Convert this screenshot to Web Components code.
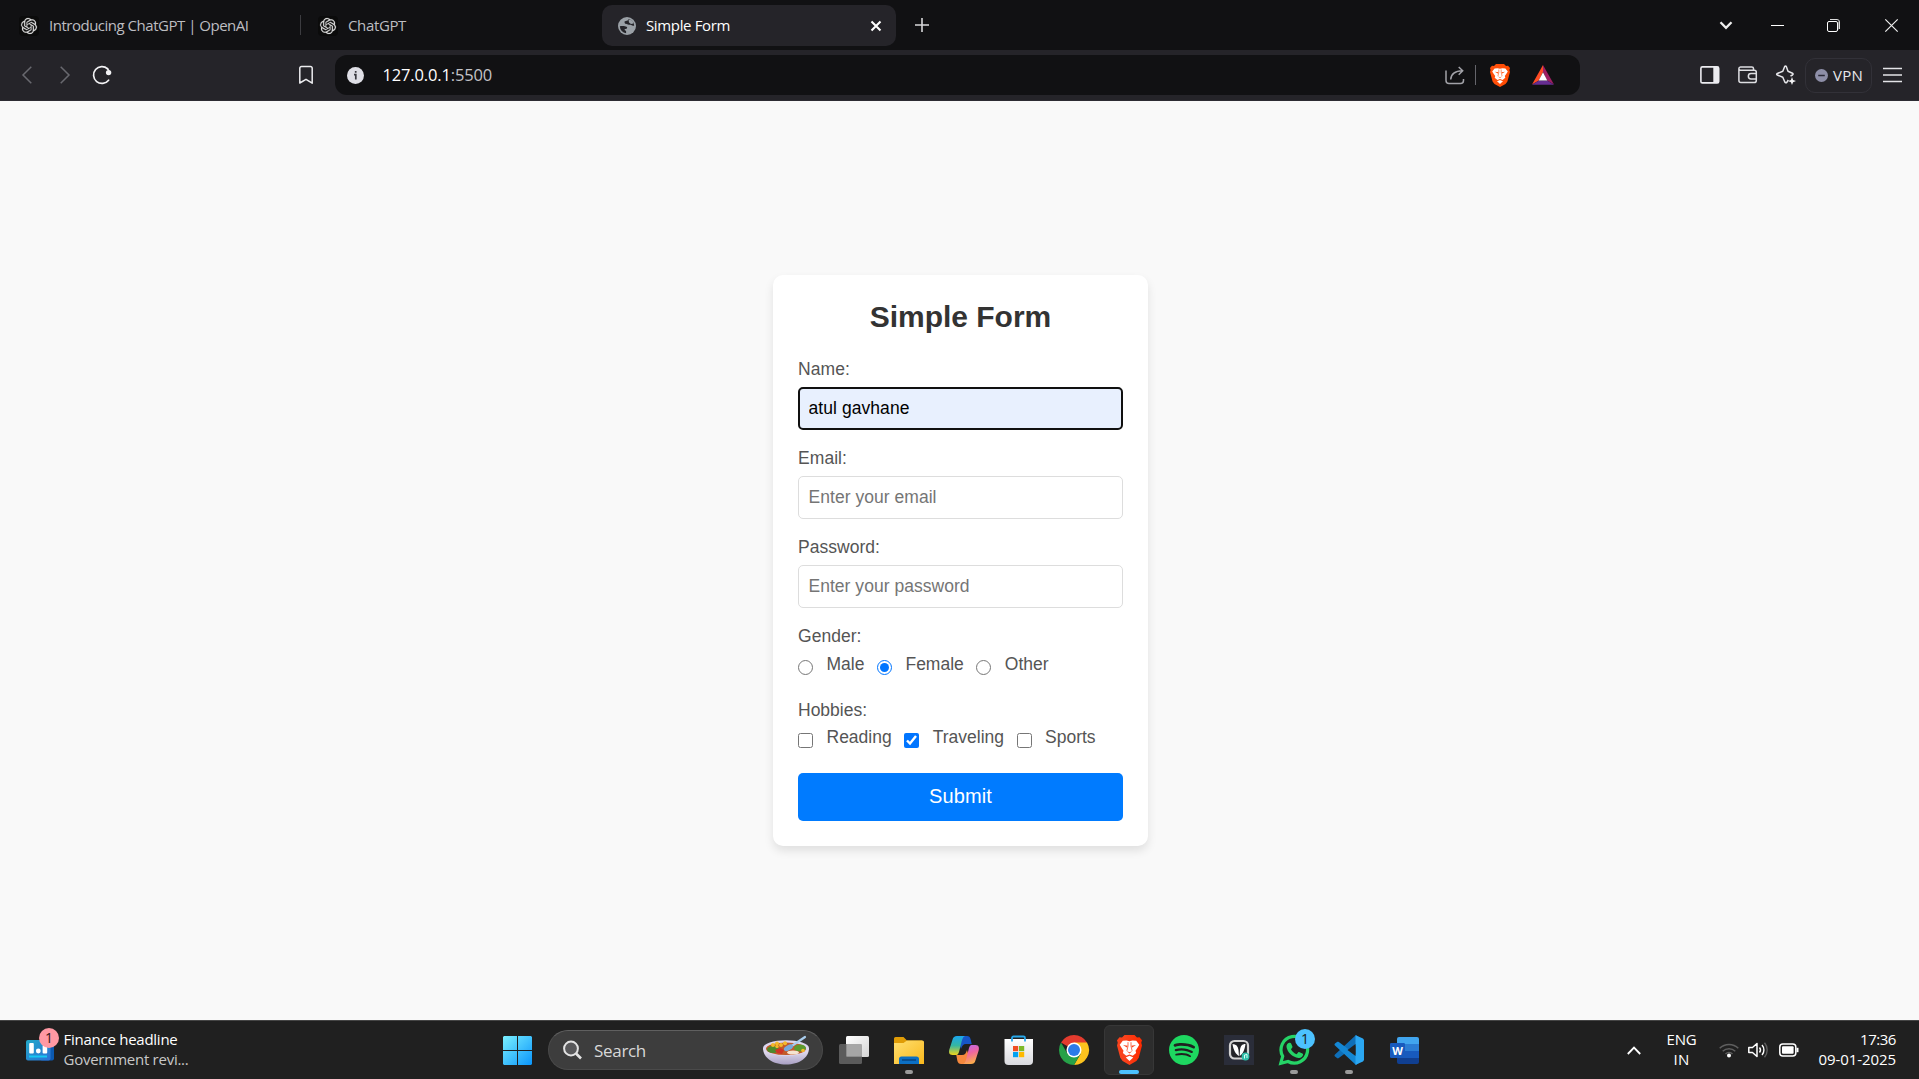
<!DOCTYPE html>
<html lang="en">
<head>
<meta charset="utf-8">
<title>Simple Form</title>
<style>
html,body{margin:0;height:100%;overflow:hidden}
body{font-family:"Open Sans","Noto Sans",sans-serif;background:#f9f9f9}
</style>
</head>
<body>
<desktop-screen></desktop-screen>
<script>
const make = (name, html, setup) => customElements.define(name, class extends HTMLElement {
  connectedCallback() {
    if (this.shadowRoot) return;
    const root = this.attachShadow({mode: 'open'});
    root.innerHTML = typeof html === 'function' ? html(this) : html;
    if (setup) setup(this, root);
  }
});

const BRAVE = (a, b) => `<defs><linearGradient id="g"><stop offset=".3" stop-color="${a}"/><stop offset="1" stop-color="${b}"/></linearGradient></defs>
<path fill="url(#g)" d="M6 0h8l2 2 2-.3L20 4l-.6 2L20 8l-2.600 9.500L15.500 20 10 23 4.500 20 2.600 17.500 0 8l.6-2L0 4l2-2.300L4 2z"/>
<path fill="#fff" d="M10 4.700 7.600 4.200 4.600 4.400 2.200 7.400 3.600 9.800 5.200 12 4.700 13.800 7.400 16 10 14.900 12.600 16 15.300 13.800 14.800 12 16.400 9.800 17.800 7.400 15.400 4.400 12.400 4.200z"/>
<path fill="#fff" d="M10 15.900 7 17.300 10 19.900 13 17.300z"/>
<path fill="${a}" d="M4.800 7.700 8.600 8.300 7.900 9.600zM15.200 7.700 11.400 8.300 12.100 9.600zM7.700 12.300 10 13.200 12.300 12.300 10 14.100z"/>
<path fill="none" stroke="${a}" stroke-width=".6" d="M8.800 5.500v3l-.9 3.600M11.200 5.500v3l.9 3.600"/>`;

const ICONS = {
  openai: [20, 20, `<rect width="20" height="20" rx="4" fill="#0b0b0b"/><g transform="translate(2 2) scale(.667)"><path fill="#dcdcdc" stroke="#dcdcdc" stroke-width=".3" d="M22.2819 9.8211a5.9847 5.9847 0 0 0-.5157-4.9108 6.0462 6.0462 0 0 0-6.5098-2.9A6.0651 6.0651 0 0 0 4.9807 4.1818a5.9847 5.9847 0 0 0-3.9977 2.9 6.0462 6.0462 0 0 0 .7427 7.0966 5.98 5.98 0 0 0 .511 4.9107 6.051 6.051 0 0 0 6.5146 2.9001A5.9847 5.9847 0 0 0 13.2599 24a6.0557 6.0557 0 0 0 5.7718-4.2058 5.9894 5.9894 0 0 0 3.9977-2.9001 6.0557 6.0557 0 0 0-.7475-7.0729zm-9.022 12.6081a4.4755 4.4755 0 0 1-2.8764-1.0408l.1419-.0804 4.7783-2.7582a.7948.7948 0 0 0 .3927-.6813v-6.7369l2.02 1.1686a.071.071 0 0 1 .038.052v5.5826a4.504 4.504 0 0 1-4.4945 4.4944zm-9.6607-4.1254a4.4708 4.4708 0 0 1-.5346-3.0137l.142.0852 4.783 2.7582a.7712.7712 0 0 0 .7806 0l5.8428-3.3685v2.3324a.0804.0804 0 0 1-.0332.0615L9.74 19.9502a4.4992 4.4992 0 0 1-6.1408-1.6464zM2.3408 7.8956a4.485 4.485 0 0 1 2.3655-1.9728V11.6a.7664.7664 0 0 0 .3879.6765l5.8144 3.3543-2.0201 1.1685a.0757.0757 0 0 1-.071 0l-4.8303-2.7865A4.504 4.504 0 0 1 2.3408 7.872zm16.5963 3.8558L13.1038 8.364 15.1192 7.2a.0757.0757 0 0 1 .071 0l4.8303 2.7913a4.4944 4.4944 0 0 1-.6765 8.1042v-5.6772a.79.79 0 0 0-.407-.667zm2.0107-3.0231l-.142-.0852-4.7735-2.7818a.7759.7759 0 0 0-.7854 0L9.409 9.2297V6.8974a.0662.0662 0 0 1 .0284-.0615l4.8303-2.7866a4.4992 4.4992 0 0 1 6.6802 4.66zM8.3065 12.863l-2.02-1.1638a.0804.0804 0 0 1-.038-.0567V6.0742a4.4992 4.4992 0 0 1 7.3757-3.4537l-.142.0805L8.704 5.459a.7948.7948 0 0 0-.3927.6813zm1.0976-2.3654l2.602-1.4998 2.6069 1.4998v2.9994l-2.5974 1.4997-2.6067-1.4997Z"/></g>`],
  globe: [18, 18, `<circle cx="9" cy="9" r="9" fill="#9aa0a6"/><path fill="#252429" d="M1.800 9.300C4 8.700 7 8.900 8.600 9.700c.9.600.7 1.700-.3 2-.9.300-1.800.2-1.700 1 .1.700 1.400.7 1.500 1.600v1.900A7.300 7.300 0 0 1 1.800 9.300zM10.500 1.900c-.1 1.500-1.500 1.900-2.600 2-1.300.1-1.600.8-1.300 1.500.4.700.1 1.300 1.200 1.400 1.200.1 1.700.9 3 1 1.200 0 1.700-.3 2.400.3.600.6 1.500.7 3 .6a7.300 7.300 0 0 0-5.700-6.800z"/><path fill="#9aa0a6" d="M10.500 2.500 14.500 3.500 15.500 6.500 13 7 11 5.500z"/>`],
  tabclose: [12, 12, `<path d="M1.500 1.500l9 9m0-9l-9 9" stroke="#fff" stroke-width="2.100" fill="none"/>`],
  plus: [14, 14, `<path d="M7 0v14M0 7h14" stroke="#d8d8da" stroke-width="1.600" fill="none"/>`],
  chevdown: [14, 9, `<path d="M1.500 1.300 7 6.800l5.500-5.500" stroke="#eee" stroke-width="2.300" fill="none"/>`],
  minimise: [13, 13, `<path d="M0 6.500h13" stroke="#fff"/>`],
  restore: [13, 13, `<rect x=".5" y="2.500" width="10" height="10" rx="1.500" fill="none" stroke="#fff"/><path d="M3 .5h7a2.500 2.500 0 0 1 2.500 2.500v7" fill="none" stroke="#ddd"/><path d="M11.500 2.500v8" stroke="#777"/>`],
  close: [13, 13, `<path d="M.3.3l12.400 12.400M12.700.3.3 12.700" stroke="#eee" stroke-width="1.200"/>`],
  back: [10, 18, `<path d="M9.300.8 1 9l8.300 8.200" stroke="#69696f" stroke-width="1.500" fill="none"/>`],
  forward: [10, 18, `<path d="M.7.8 9 9 .7 17.200" stroke="#69696f" stroke-width="1.500" fill="none"/>`],
  reload: [20, 20, `<path d="M16.600 15.200A8.400 8.400 0 1 1 15.600 3.800" stroke="#f2f2f4" stroke-width="1.700" fill="none" stroke-linecap="round"/><circle cx="16.600" cy="7.600" r="2.700" fill="#f2f2f4"/><path d="M15 3l2 3" stroke="#f2f2f4" stroke-width="1.500"/>`],
  bookmark: [16, 20, `<path d="M1.800 18V3.200A1.700 1.700 0 0 1 3.500 1.500h9a1.700 1.700 0 0 1 1.700 1.700V18.200L8 14.300z" stroke="#ececef" stroke-width="1.500" fill="none" stroke-linejoin="round"/>`],
  info: [17, 17, `<circle cx="8.500" cy="8.500" r="8.500" fill="#dfdfe6"/><path d="M7 7.700h1.800v4.800M8.700 4.100v1.700" stroke="#3a3a40" stroke-width="1.700" fill="none"/>`],
  share: [20, 19, `<path d="M1 4.500V14.500a3 3 0 0 0 3 3h11.500a3 3 0 0 0 3-3V13" stroke="#a2a2a8" stroke-width="1.500" fill="none"/><path d="M5.700 13.500C6 8.500 9.500 5 17.500 4.800M13.700 1l4 3.800-4 3.900" stroke="#a2a2a8" stroke-width="1.500" fill="none"/>`],
  brave: [20, 23, BRAVE('#ff4f0a', '#ff4a00')],
  braveapp: [25, 30, BRAVE('#f9421c', '#ff2a00'), '0 0 20 23'],
  bat: [22, 20, `<path fill="#ff4c24" d="M11 0 0 19.500l6.800-4L11 7z"/><path fill="#9e1f63" d="M11 0l11 19.500-6.800-4L11 7z"/><path fill="#662d91" d="M0 19.700h22l-6.800-4.300H6.800z"/><path fill="#fff" d="M11 7.300 6.700 15.400h8.600z"/>`],
  panel: [20, 18, `<rect x=".9" y=".9" width="17.800" height="16" rx="1.500" fill="none" stroke="#ececf0" stroke-width="1.600"/><path fill="#ececf0" d="M13.300 1h5.700v16h-5.700z"/>`],
  wallet: [20, 18, `<path d="M15.500 4.300V2.600a1.700 1.700 0 0 0-1.700-1.700H2.500A1.700 1.700 0 0 0 .9 2.600v12a2 2 0 0 0 2 2h13.200a2.200 2.200 0 0 0 2.200-2.200V6.200a2 2 0 0 0-2-2H2.500A1.600 1.600 0 0 1 .9 2.700M18 7.600h-5a2.600 2.600 0 0 0 0 5.300h5" stroke="#dedee2" stroke-width="1.500" fill="none"/>`],
  sparkle: [20, 20, `<path d="M12.800 15 11.300 17.400Q10.300 18.300 9.300 17L7.300 12.300 1.800 10Q.5 9.300 1.800 8.500L7.300 6.300 9.200 1.500Q10 .3 10.800 1.500L12.500 6.300 17 8.200Q18.200 9 17 10L15 11" transform="translate(-.5)" stroke="#e6e6ea" stroke-width="1.500" fill="none" stroke-linejoin="round"/><path d="M16 12l1.100 3 2.900 1.100-2.900 1.100-1.100 2.800-1.100-2.800L12 16.100l2.900-1.100z" fill="#f2f2f4"/>`],
  vpndot: [13, 13, `<circle cx="6.500" cy="6.500" r="6.500" fill="#8e8fa8"/><path d="M3.200 6.500h6.600" stroke="#2a2a38" stroke-width="1.500"/>`],
  menu: [19, 16, `<path d="M0 1.500h19M0 8h19M0 14.500h19" stroke="#e4e4e8" stroke-width="1.600"/>`],
  widget: [28, 21, `<defs><linearGradient id="g" x2="1" y2="1"><stop stop-color="#22a9c8"/><stop offset="1" stop-color="#2b6fd6"/></linearGradient></defs><rect x="14" y="0" width="14" height="20.500" rx="2" fill="#0b59b0"/><rect width="24.500" height="20.500" rx="2" fill="url(#g)"/><rect x="3.200" y="3" width="4.600" height="10.500" rx="1" fill="#fff"/><circle cx="12.300" cy="11" r="2.400" fill="#fff"/><rect x="16.600" y="5" width="4.600" height="8.500" rx="1" fill="#fff"/><path d="M3 16.500h18" stroke="#17c8f3" stroke-width="2"/>`],
  start: [29, 29, `<defs><linearGradient id="g" gradientUnits="userSpaceOnUse" x2="29" y2="29"><stop stop-color="#7af0ff"/><stop offset="1" stop-color="#0a95fb"/></linearGradient></defs><path fill="url(#g)" d="M1 0h13v14H0V1zM15 0h13l1 1v13H15zM0 15h14v14H1l-1-1zM15 15h14v13l-1 1H15z"/>`],
  search: [19, 20, `<circle cx="8" cy="8.500" r="6.900" fill="#58585a" stroke="#e3e3e3" stroke-width="2"/><path d="M13 13.500l5 5" stroke="#e3e3e3" stroke-width="2.600"/>`],
  bowl: [46, 29, `<defs><linearGradient id="g" x2="0" y2="1"><stop stop-color="#efeaf8"/><stop offset="1" stop-color="#a9a0c4"/></linearGradient></defs><path fill="url(#g)" d="M0 12C0 22 10 28.500 23 28.500S46 22 46 12z"/><ellipse cx="23" cy="12" rx="23" ry="7.800" fill="#dcd5ee"/><ellipse cx="23" cy="12.700" rx="20" ry="6.300" fill="#c25a2a"/><ellipse cx="10" cy="13.500" rx="6" ry="3.500" fill="#4d8a2b"/><ellipse cx="37" cy="12" rx="6" ry="3.600" fill="#5c9a2f"/><g fill="#f3b929"><circle cx="10" cy="9" r="2"/><circle cx="14" cy="7.500" r="2"/><circle cx="18" cy="9" r="2"/><circle cx="22" cy="7.300" r="2"/><circle cx="14" cy="10.500" r="1.700"/><circle cx="40" cy="14.500" r="1.800"/></g><path fill="#cf3326" d="M12 14l5-2 4 2-2 4-5-1z"/><ellipse cx="30" cy="16.500" rx="6" ry="2" fill="#f5e4d0"/><path d="M25 12.500 42 1" stroke="#a9cdee" stroke-width="2.200" stroke-linecap="round"/><ellipse cx="25.500" cy="12" rx="5" ry="2.500" transform="rotate(-28 25 12)" fill="#78a9da"/>`],
  taskview: [30, 28, `<defs><linearGradient id="g" x2="1" y2="1"><stop stop-color="#fff"/><stop offset="1" stop-color="#d5d5d5"/></linearGradient></defs><rect x="7" y="0" width="23" height="21" rx="1.500" fill="url(#g)"/><rect x="0" y="8" width="23" height="20" rx="1.500" fill="#646464" opacity=".87"/><path d="M7.500 8h15.500v12.500h-15.500z" fill="#bbb" opacity=".7"/>`],
  folder: [30, 27, `<defs><linearGradient id="g" x2="1" y2="1"><stop stop-color="#ffdf70"/><stop offset="1" stop-color="#f9b81c"/></linearGradient></defs><path fill="#e09c06" d="M0 1.500A1.500 1.500 0 0 1 1.500 0h8L13 3.500h15V10H0z"/><path fill="url(#g)" d="M0 6h9.500l3.500-2.500h15.500A1.500 1.500 0 0 1 30 5v22H0z"/><path fill="#0c70c4" d="M5 27v-5a2.500 2.500 0 0 1 2.500-2.500h15A2.500 2.500 0 0 1 25 22v5z"/><path stroke="#073f78" stroke-width="1.300" d="M8 23h14"/>`],
  copilot: [30, 28, `<defs><linearGradient id="a" x2="0" y2="1"><stop stop-color="#1ba6ee"/><stop offset=".5" stop-color="#35b6a2"/><stop offset="1" stop-color="#f0d41b"/></linearGradient><linearGradient id="b" x2=".3" y2="1"><stop stop-color="#b46cf5"/><stop offset=".5" stop-color="#ef64a2"/><stop offset="1" stop-color="#fba94e"/></linearGradient></defs><path fill="#1655c8" d="M8 0h10c2 0 3 1.200 3.600 3.200L22.700 8H17c-3 0-4 2-5 5z"/><path fill="#f5883d" d="M22 28H12c-2 0-3-1-3.600-3L7.300 19H13c3 0 4-2 5-5z"/><path fill="url(#a)" d="M8 0h8c-2.500 1-3 4-4 8l-2 8c-.8 2.500-1.500 3-4 3H3.500C0 19-.5 16 .5 13L3.400 4C4.200 1 5.500 0 8 0z"/><path fill="url(#b)" d="M22 28h-8c2.500-1 3-4 4-8l2-8c.8-2.500 1.500-3 4-3h2.500c3.500 0 4 3 3 6l-2.900 9c-.8 3-2.100 4-4.600 4z"/>`],
  store: [30, 30, `<defs><linearGradient id="g" x2="0" y2="1"><stop stop-color="#fff"/><stop offset="1" stop-color="#d9dade"/></linearGradient></defs><path d="M8 6V3a1.500 1.500 0 0 1 1.500-1.500h10A1.500 1.500 0 0 1 21 3v3" fill="none" stroke="#28a8ea" stroke-width="1.800"/><path fill="url(#g)" d="M1 4h28v22a4 4 0 0 1-4 4H4.500A4 4 0 0 1 .5 26V4z"/><path d="M8 4v2.500M21 4v2.500" stroke="#28a8ea" stroke-width="1.800"/><path fill="#f04e23" d="M9 11h5.200v5.200H9z"/><path fill="#7db928" d="M15 11h5.200v5.200H15z"/><path fill="#00a1f1" d="M9 17h5.200v5.200H9z"/><path fill="#ffb900" d="M15 17h5.200v5.200H15z"/>`],
  chrome: [30, 30, `<path fill="#e33b2e" d="M15 15 2.010 7.500A15 15 0 0 1 27.990 7.500z"/><path fill="#fcc31e" d="M15 15V7.500h13A15 15 0 0 1 15 30l6.500-11z"/><path fill="#26a148" d="M2.010 7.500A15 15 0 0 0 15 30l6.500-11.300L15 15 8.500 18.700z"/><circle cx="15" cy="15" r="7.500" fill="#fff"/><circle cx="15" cy="15" r="6" fill="#2c7be8"/>`],
  spotify: [30, 30, `<path fill="#1ed760" d="M12 0C5.400 0 0 5.400 0 12s5.400 12 12 12 12-5.400 12-12S18.660 0 12 0zm5.521 17.340c-.24.359-.66.480-1.021.240-2.820-1.740-6.360-2.101-10.561-1.141-.418.122-.779-.179-.899-.539-.12-.421.180-.780.540-.900 4.560-1.021 8.520-.600 11.640 1.320.420.180.479.659.301 1.020zm1.440-3.300c-.301.420-.841.600-1.262.300-3.239-1.980-8.159-2.580-11.939-1.380-.479.120-1.020-.120-1.140-.600-.120-.480.120-1.021.600-1.141C9.600 9.900 15 10.561 18.720 12.840c.361.181.540.780.241 1.200zm.120-3.360C15.240 8.400 8.820 8.160 5.160 9.301c-.600.179-1.200-.181-1.380-.721-.180-.601.180-1.200.720-1.381 4.260-1.260 11.280-1.020 15.721 1.621.539.300.719 1.020.419 1.560-.299.421-1.020.599-1.559.300z"/>`, '0 0 24 24'],
  jio: [30, 30, `<path fill="#2a2d39" d="M0 0h30v30H0z"/><rect x="6" y="6" width="18" height="17.500" rx="4.500" fill="#232428" stroke="#d2d2d2" stroke-width="2.200"/><path fill="#fff" d="M8.500 9c3.500 0 5.500 2 6 6L15 21c-3-1.500-5.700-6-6.500-12zM21.500 9c-3.500 0-5 2-5.500 6L15.600 21c3-1.500 5.100-6 5.900-12z"/><circle cx="21.500" cy="21.500" r="3.900" fill="#2fbfa9"/><path d="M20.500 23.500v-3.500l2.500-.5v3.500" stroke="#d8fff8" fill="none"/>`],
  whatsapp: [30, 30, `<path d="M1.800 28.200 3.700 21.300A13.300 13.300 0 1 1 9 26.500z" fill="none" stroke="#25d366" stroke-width="3.200"/><path fill="#25d366" d="M10.300 7.800c.8-.3 1.500 0 1.800.6l1.300 3c.2.600 0 1-.3 1.400l-1.100 1.400c1.300 2.400 3.200 4 5.600 5l1.500-1.700c.4-.5.9-.5 1.400-.3l2.900 1.400c.6.300.8.6.7 1.200-.4 2.200-2.300 3.500-4.600 3.200C13 22 8.400 17 7.500 12c-.2-1.900 1-3.700 2.800-4.200z"/>`],
  vscode: [30, 30, `<path fill="#0f6fb8" d="M22 0 1 19.500c-.7.700-.6 1.400 0 2L3 23c.6.500 1.200.5 1.800 0L29 5z"/><path fill="#1487d4" d="M22 30 1 10.500c-.7-.7-.6-1.400 0-2L3 7c.6-.5 1.200-.5 1.800 0L29 25z"/><path fill="#2ba7f2" d="M21.500.2 29 3.500l1 1.500v20l-1 1.500-7.500 3.300V0z"/><path fill="#222" d="M21.500 9v12L13.500 15z"/>`],
  word: [29, 27, `<path fill="#41a5ee" d="M7 2a2 2 0 0 1 2-2h18a2 2 0 0 1 2 2v5H7z"/><path fill="#2b7cd3" d="M7 7h22v7H7z"/><path fill="#185abd" d="M7 14h22v7H7z"/><path fill="#103f91" d="M7 21h22v4a2 2 0 0 1-2 2H9a2 2 0 0 1-2-2z"/><rect x="0" y="6" width="15" height="15" rx="1.200" fill="#185abd"/><text x="7.500" y="17.600" text-anchor="middle" font-family="Open Sans" font-weight="700" font-size="11" fill="#fff">W</text>`],
  caret: [14, 9, `<path d="M.8 8 7 1.600 13.200 8" stroke="#fff" stroke-width="1.800" fill="none"/>`],
  wifi: [20, 16, `<g fill="none" stroke="#5e5e5e" stroke-width="1.500"><path d="M.7 6.300a13 13 0 0 1 18.600 0M3.700 9.300a9 9 0 0 1 12.600 0M6.500 12a5 5 0 0 1 7 0"/></g><circle cx="10" cy="13.500" r="2" fill="#fff"/>`],
  speaker: [20, 16, `<path d="M.8 5.500h3.700L9 1.500v13l-4.500-4H.8z" fill="none" stroke="#fff" stroke-width="1.500" stroke-linejoin="round"/><path d="M11.500 5.500a4 4 0 0 1 0 5M14 3a7.500 7.500 0 0 1 0 10" fill="none" stroke="#fff" stroke-width="1.400"/><path d="M16.500.8a11 11 0 0 1 0 14.400" fill="none" stroke="#5e5e5e" stroke-width="1.400"/>`],
  battery: [20, 14, `<rect x=".8" y="1" width="16" height="12" rx="3" fill="none" stroke="#fff" stroke-width="1.500"/><rect x="3" y="3.200" width="11.600" height="7.600" rx="1" fill="#fff"/><path d="M18.500 4.800v4.400" stroke="#fff" stroke-width="2"/>`]
};

/* Inline icon; name picks the drawing */
make('ui-icon', el => {
  const [w, h, body, box] = ICONS[el.getAttribute('name')];
  return `<style>:host{display:block;flex:none;width:${w}px;height:${h}px}svg{display:block;overflow:visible}</style><svg width="${w}" height="${h}" viewBox="${box || `0 0 ${w} ${h}`}"${box ? ' preserveAspectRatio="none"' : ''}>${body}</svg>`;
});

/* Single-line text tracked to occupy a given advance width */
make('fit-text', `<style>:host{display:block;flex:none;white-space:nowrap;width:max-content}</style><slot></slot>`, el => {
  const w = parseFloat(el.getAttribute('w'));
  const natural = el.getBoundingClientRect().width;
  const n = el.textContent.length;
  el.style.letterSpacing = ((w - natural) / n).toFixed(3) + 'px';
});

make('browser-tab', el => `<style>
:host{display:flex;align-items:center;box-sizing:border-box;height:41px;border-radius:10px;font-size:15px;line-height:20px;color:#bdbdc1;flex:none}
:host([active]){background:#252429;color:#fff}
fit-text{margin:0 0 2px 10px}
.x{margin-left:auto}
</style><ui-icon name="${el.getAttribute('icon')}"></ui-icon><fit-text w="${el.getAttribute('w')}">${el.getAttribute('label')}</fit-text>${el.hasAttribute('active') ? '<ui-icon class="x" name="tabclose"></ui-icon>' : ''}`);

make('tab-strip', `<style>
:host{display:flex;align-items:center;height:50px;background:#111113;flex:none}
.a{width:300px;padding-left:19px}
.sep{width:1px;height:20px;background:#3c3c40}
.b{width:301px;padding-left:17px}
.c{width:294px;padding:0 14px 0 16px}
.c,.a,.b{margin-top:1px}
.plus{margin-left:19px}
.d{margin-left:auto}
.m{margin-left:38px}.r{margin-left:43px}.x{margin-left:45px;margin-right:21px}
</style>
<browser-tab class="a" icon="openai" w="199.500" label="Introducing ChatGPT | OpenAI"></browser-tab><div class="sep"></div>
<browser-tab class="b" icon="openai" w="58" label="ChatGPT"></browser-tab>
<browser-tab class="c" active icon="globe" w="84" label="Simple Form"></browser-tab>
<ui-icon class="plus" name="plus"></ui-icon>
<ui-icon class="d" name="chevdown"></ui-icon><ui-icon class="m" name="minimise"></ui-icon><ui-icon class="r" name="restore"></ui-icon><ui-icon class="x" name="close"></ui-icon>`);

make('tool-bar', `<style>
:host{display:flex;align-items:center;height:51px;box-sizing:border-box;padding-left:22px;background:#252429;flex:none;color:#fff;border-bottom:1px solid #2d2c33}
.f{margin-left:28px}.r{margin-left:22px}.b{margin-left:186px}
.url{display:flex;align-items:center;box-sizing:border-box;width:1245px;height:40px;margin-left:21px;padding-left:12px;border-radius:12px;background:#111113;font-size:16.500px}
.url fit-text{margin:0 0 2px 18.500px}
span{color:#c3c3c7}
.s{margin-left:auto}
.bar{width:1px;height:20px;background:#65656b;margin-left:10px}
.br{margin-left:14px}.bat{margin:0 26px 0 22px}
.p{margin-left:120px}.w{margin-left:18px}.k{margin-left:18px}
.vpn{display:flex;align-items:center;box-sizing:border-box;width:67px;height:35px;margin-left:9px;padding-left:9px;border:1px solid #323138;border-radius:10px;font-size:15px;color:#e8e8ec}
.vpn fit-text{margin-left:5px}
.m{margin-left:11px}
</style>
<ui-icon name="back"></ui-icon><ui-icon class="f" name="forward"></ui-icon><ui-icon class="r" name="reload"></ui-icon><ui-icon class="b" name="bookmark"></ui-icon>
<div class="url"><ui-icon name="info"></ui-icon><fit-text w="109.500">127.0.0.1<span>:5500</span></fit-text><ui-icon class="s" name="share"></ui-icon><div class="bar"></div><ui-icon class="br" name="brave"></ui-icon><ui-icon class="bat" name="bat"></ui-icon></div>
<ui-icon class="p" name="panel"></ui-icon><ui-icon class="w" name="wallet"></ui-icon><ui-icon class="k" name="sparkle"></ui-icon>
<div class="vpn"><ui-icon name="vpndot"></ui-icon><fit-text w="30">VPN</fit-text></div><ui-icon class="m" name="menu"></ui-icon>`);

make('form-field', el => `<style>
:host{display:block;height:89px;color:#555}
label{display:block;height:20px;margin-bottom:8px;line-height:20px}
input{display:block;box-sizing:border-box;width:325px;height:43px;margin:0;padding:0 9.500px;border:1px solid #ddd;border-radius:5px;background:#fff;font:inherit;outline:0}
input::placeholder{color:#757575;opacity:1}
:host([filled]) input{border:2px solid #101010;padding:0 8.500px;background:#e8f0fe;color:#000}
</style><label><fit-text w="${el.getAttribute('lw')}">${el.getAttribute('label')}</fit-text></label>
<input type="text" ${el.hasAttribute('filled') ? 'value' : 'placeholder'}="${el.getAttribute('text')}">`, (el, root) => {
  const ctx = document.createElement('canvas').getContext('2d');
  ctx.font = '17.5px "Liberation Sans"';
  const t = el.getAttribute('text');
  root.querySelector('input').style.letterSpacing = ((el.getAttribute('tw') - ctx.measureText(t).width) / t.length).toFixed(3) + 'px';
});

make('choice-option', el => `<style>
:host{display:flex;align-items:flex-start;flex:none}
input{width:15px;height:15px;margin:5.500px 13.500px 0 0;accent-color:#0075ff}
</style><input type="${el.getAttribute('type')}" ${el.hasAttribute('checked') ? 'checked' : ''}><fit-text w="${el.getAttribute('w')}"><slot></slot></fit-text>`, (el, root) => {
  const t = root.querySelector('fit-text');
  t.textContent = el.textContent;
});

make('simple-form', `<style>
:host{display:block;box-sizing:border-box;width:375px;height:571px;padding:24px 25px 25px;background:#fff;border-radius:10px;box-shadow:0 5px 10px rgba(0,0,0,.1);font-family:"Liberation Sans",Arial,sans-serif;font-size:17.500px;line-height:20px;color:#555}
h2{display:flex;justify-content:center;margin:0 0 25px;height:35px;line-height:35px;font-size:30px;color:#333}
.row{display:flex;height:20px}
.g{margin:8px 0 26px}.h{margin:7px 0 26px}
.g choice-option+choice-option,.h choice-option+choice-option{margin-left:12.500px}
button{display:flex;justify-content:center;align-items:center;width:325px;height:48px;padding:0 0 2px;border:0;border-radius:5px;background:#007bff;color:#fff;font:20px "Liberation Sans",Arial,sans-serif}
</style>
<h2><fit-text w="181.500">Simple Form</fit-text></h2>
<form-field label="Name:" lw="52" filled text="atul gavhane" tw="101"></form-field>
<form-field label="Email:" lw="49" text="Enter your email" tw="128"></form-field>
<form-field label="Password:" lw="82" text="Enter your password" tw="161"></form-field>
<fit-text w="63.500">Gender:</fit-text>
<div class="row g"><choice-option type="radio" w="37.500">Male</choice-option><choice-option type="radio" checked w="58">Female</choice-option><choice-option type="radio" w="44">Other</choice-option></div>
<fit-text w="69">Hobbies:</fit-text>
<div class="row h"><choice-option type="checkbox" w="65">Reading</choice-option><choice-option type="checkbox" checked w="71.500">Traveling</choice-option><choice-option type="checkbox" w="51">Sports</choice-option></div>
<button><fit-text w="63">Submit</fit-text></button>`);

make('count-badge', `<style>:host{display:flex;align-items:center;justify-content:center;box-sizing:border-box;width:20px;height:20px;border-radius:50%;color:#1a1a1a;font-size:14px;line-height:20px}</style><slot></slot>`);

make('task-item', el => `<style>
:host{position:relative;display:flex;align-items:center;justify-content:center;box-sizing:border-box;width:50px;height:50px;margin-right:5px;border-radius:6px;flex:none}
:host([state=active]){background:#2d2d2d;border:1px solid #373737}
i{position:absolute;left:50%;bottom:1px;width:8px;height:4px;margin-left:-4px;border-radius:2px;background:#9a9a9a}
:host([state=active]) i{width:20px;margin-left:-10px;bottom:0;background:#4cc2ff}
::slotted(count-badge){position:absolute;left:26px;top:4px;background:#4cc2ff}
</style><ui-icon name="${el.getAttribute('icon')}"></ui-icon>${el.hasAttribute('state') ? '<i></i>' : ''}<slot></slot>`);

make('task-bar', `<style>
:host{display:flex;align-items:center;box-sizing:border-box;height:59px;border-top:1px solid #454545;background:#202020;color:#fff;font-size:15px;line-height:20px;flex:none}
.news{display:flex;align-items:center;width:477px;padding-left:26px;position:relative}
.news count-badge{position:absolute;left:39px;top:-1px;background:#ff99a4;color:#331518}
.news div{margin:0 0 2px 9.500px}
.sub{color:#c8c8c8}
.search{display:flex;align-items:center;box-sizing:border-box;width:275px;height:40px;margin-left:16px;padding:0 13px 0 14px;border-radius:20px;background:#3d3d3d;border:1px solid #4a4a4a;border-top-color:#606060;font-size:17px;color:#d8d8d8}
.search fit-text{margin:1px 0 0 12px}
.search .bowl{margin-left:auto}
.apps{display:flex;margin-left:6px}
.tray{display:flex;align-items:center;margin-left:auto;margin-right:23px}
.lang,.clock{margin-bottom:2px}
.lang{display:flex;flex-direction:column;align-items:center;margin-right:22px;margin-left:26px}
.sp{margin:0 11px 0 9px}
.clock{display:flex;flex-direction:column;align-items:flex-end;margin-left:20px}
</style>
<div class="news"><ui-icon name="widget"></ui-icon><count-badge>1</count-badge><div><fit-text w="114">Finance headline</fit-text><fit-text class="sub" w="125">Government revi...</fit-text></div></div>
<ui-icon name="start"></ui-icon>
<div class="search"><ui-icon name="search"></ui-icon><fit-text w="52">Search</fit-text><ui-icon class="bowl" name="bowl"></ui-icon></div>
<div class="apps">
<task-item icon="taskview"></task-item><task-item icon="folder" state="open"></task-item><task-item icon="copilot"></task-item><task-item icon="store"></task-item><task-item icon="chrome"></task-item><task-item icon="braveapp" state="active"></task-item><task-item icon="spotify"></task-item><task-item icon="jio"></task-item><task-item icon="whatsapp" state="open"><count-badge>1</count-badge></task-item><task-item icon="vscode" state="open"></task-item><task-item icon="word"></task-item>
</div>
<div class="tray"><ui-icon name="caret"></ui-icon><div class="lang"><fit-text w="30">ENG</fit-text><fit-text w="16">IN</fit-text></div><ui-icon name="wifi"></ui-icon><ui-icon class="sp" name="speaker"></ui-icon><ui-icon name="battery"></ui-icon><div class="clock"><fit-text w="36">17:36</fit-text><fit-text w="77.500">09-01-2025</fit-text></div></div>`);

make('desktop-screen', `<style>
:host{display:flex;flex-direction:column;height:100vh}
main{flex:1;display:flex;align-items:center;justify-content:center;background:#f9f9f9;padding-left:2px}
</style><tab-strip></tab-strip><tool-bar></tool-bar><main><simple-form></simple-form></main><task-bar></task-bar>`);
</script>
</body>
</html>
